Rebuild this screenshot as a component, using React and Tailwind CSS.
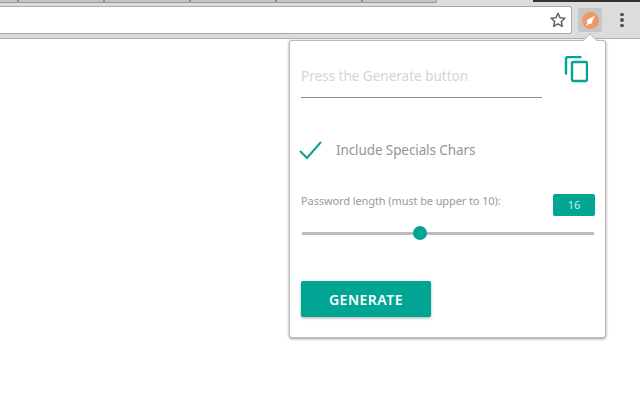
import React from "react";

const Tab = ({ w }) => (
  <div className="h-[2px] border-r-2 border-[#8f8f8f] shrink-0" style={{ width: w }} />
);

export default function App() {
  return (
    <div className="relative w-[640px] h-[400px] overflow-hidden bg-white font-['Noto_Sans',sans-serif]">
      <div className="h-[39px] bg-[#dcdcdc] border-b border-[#b0b0b0] flex flex-col">
        <div className="h-[3px] flex items-start">
          <div className="flex w-[437px] h-[3px] bg-[#c4c4c4] border-b border-r border-[#9a9a9a] rounded-br-[2px]">
            <Tab w={19} /><Tab w={86} /><Tab w={86} /><Tab w={86} /><Tab w={86} />
          </div>
          <div className="ml-auto w-[107px] h-[2px] bg-[#333333]" />
        </div>
        <div className="flex items-center flex-1 pb-[1px]">
          <div className="flex-1 h-[28px] bg-white border border-l-0 border-[#a9a9a9] rounded-r-[3px] flex items-center justify-end pr-[4px]">
            <svg width="18" height="18" viewBox="0 0 24 24" fill="none" stroke="#5f5f5f" strokeWidth="2" strokeLinejoin="round"><path d="M12 3l2.800 6 6.400.7-4.800 4.300 1.400 6.400L12 17.100l-5.800 3.300 1.400-6.400-4.800-4.300 6.400-.7z" /></svg>
          </div>
          <div className="w-[24px] h-[24px] ml-[6px] bg-[#c6c6c6] rounded-[2px] flex items-center justify-center">
            <svg width="17" height="17" viewBox="0 0 17 17"><circle cx="8.500" cy="8.500" r="8.500" fill="#ea9a62" /><circle cx="7.500" cy="9.500" r="2.600" fill="#fff" /><path d="M6 7.500L13 3.500 9.500 11z" fill="#fff" /><path d="M5.500 11l1 1-1.500 1.500-1-1z" fill="#fff" /></svg>
          </div>
          <div className="w-[38px] pl-[2px] flex flex-col items-center gap-[2px]">
            <span className="w-[3.500px] h-[3.500px] rounded-full bg-[#505050]" />
            <span className="w-[3.500px] h-[3.500px] rounded-full bg-[#505050]" />
            <span className="w-[3.500px] h-[3.500px] rounded-full bg-[#505050]" />
          </div>
        </div>
      </div>

      <div className="absolute left-[289px] top-[40px] w-[317px] h-[298px] bg-white border border-[#b9b9b9] rounded-[3px] shadow-[0_1px_3px_rgba(0,0,0,0.4)] flex flex-col px-[11px]">
        <div className="absolute -top-[6px] left-[295px] w-[10px] h-[10px] rotate-45 bg-white border-l border-t border-[#b9b9b9]" />
        <div className="flex items-start justify-between mt-[15px]">
          <div className="w-[241px] h-[42px] border-b border-[#8f8f8f] flex items-center pb-[1px] text-[13.500px] text-[#d4d4d4]">Press the Generate button</div>
          <svg className="mr-[6px]" width="24" height="27" viewBox="0 0 24 27" fill="none" stroke="#00a693" strokeWidth="2.400"><path d="M17.500 1H4Q2 1 2 3V18.500" /><path d="M9.500 6h12a1.500 1.500 0 0 1 1.500 1.500V23.500a1.500 1.500 0 0 1-1.500 1.500h-12A1.500 1.500 0 0 1 8 23.500V7.500A1.500 1.500 0 0 1 9.500 6z" /></svg>
        </div>
        <div className="flex items-center mt-[40px] h-[24px]">
          <svg className="-ml-[2px]" width="24" height="20" viewBox="0 0 24 20" fill="none" stroke="#00a693" strokeWidth="2"><path d="M1 11l7 7L22 2" /></svg>
          <span className="ml-[13px] text-[13.500px] tracking-[-0.1px] text-[#959595]">Include Specials Chars</span>
        </div>
        <div className="flex items-start justify-between -mr-px mt-[32px] h-[26px]">
          <span className="text-[11px] leading-[14px] tracking-[-0.1px] text-[#9a9a9a]">Password length (must be upper to 10):</span>
          <div className="w-[42px] h-[22px] bg-[#00a693] rounded-[2px] text-[11px] text-[#c8eee9] flex items-center justify-center">16</div>
        </div>
        <div className="relative h-[16px] mt-[5px] flex items-center">
          <div className="ml-px h-[3px] w-[292px] bg-[#bdbdbd]" />
          <div className="absolute left-[112px] top-px w-[14px] h-[14px] rounded-full bg-[#00a693]" />
        </div>
        <button className="mt-[40px] w-[130px] h-[36px] rounded-[2px] bg-[#00a693] text-white text-[14px] font-semibold tracking-[0.5px] shadow-[0_1px_3px_rgba(0,0,0,0.35)]">GENERATE</button>
      </div>
    </div>
  );
}
